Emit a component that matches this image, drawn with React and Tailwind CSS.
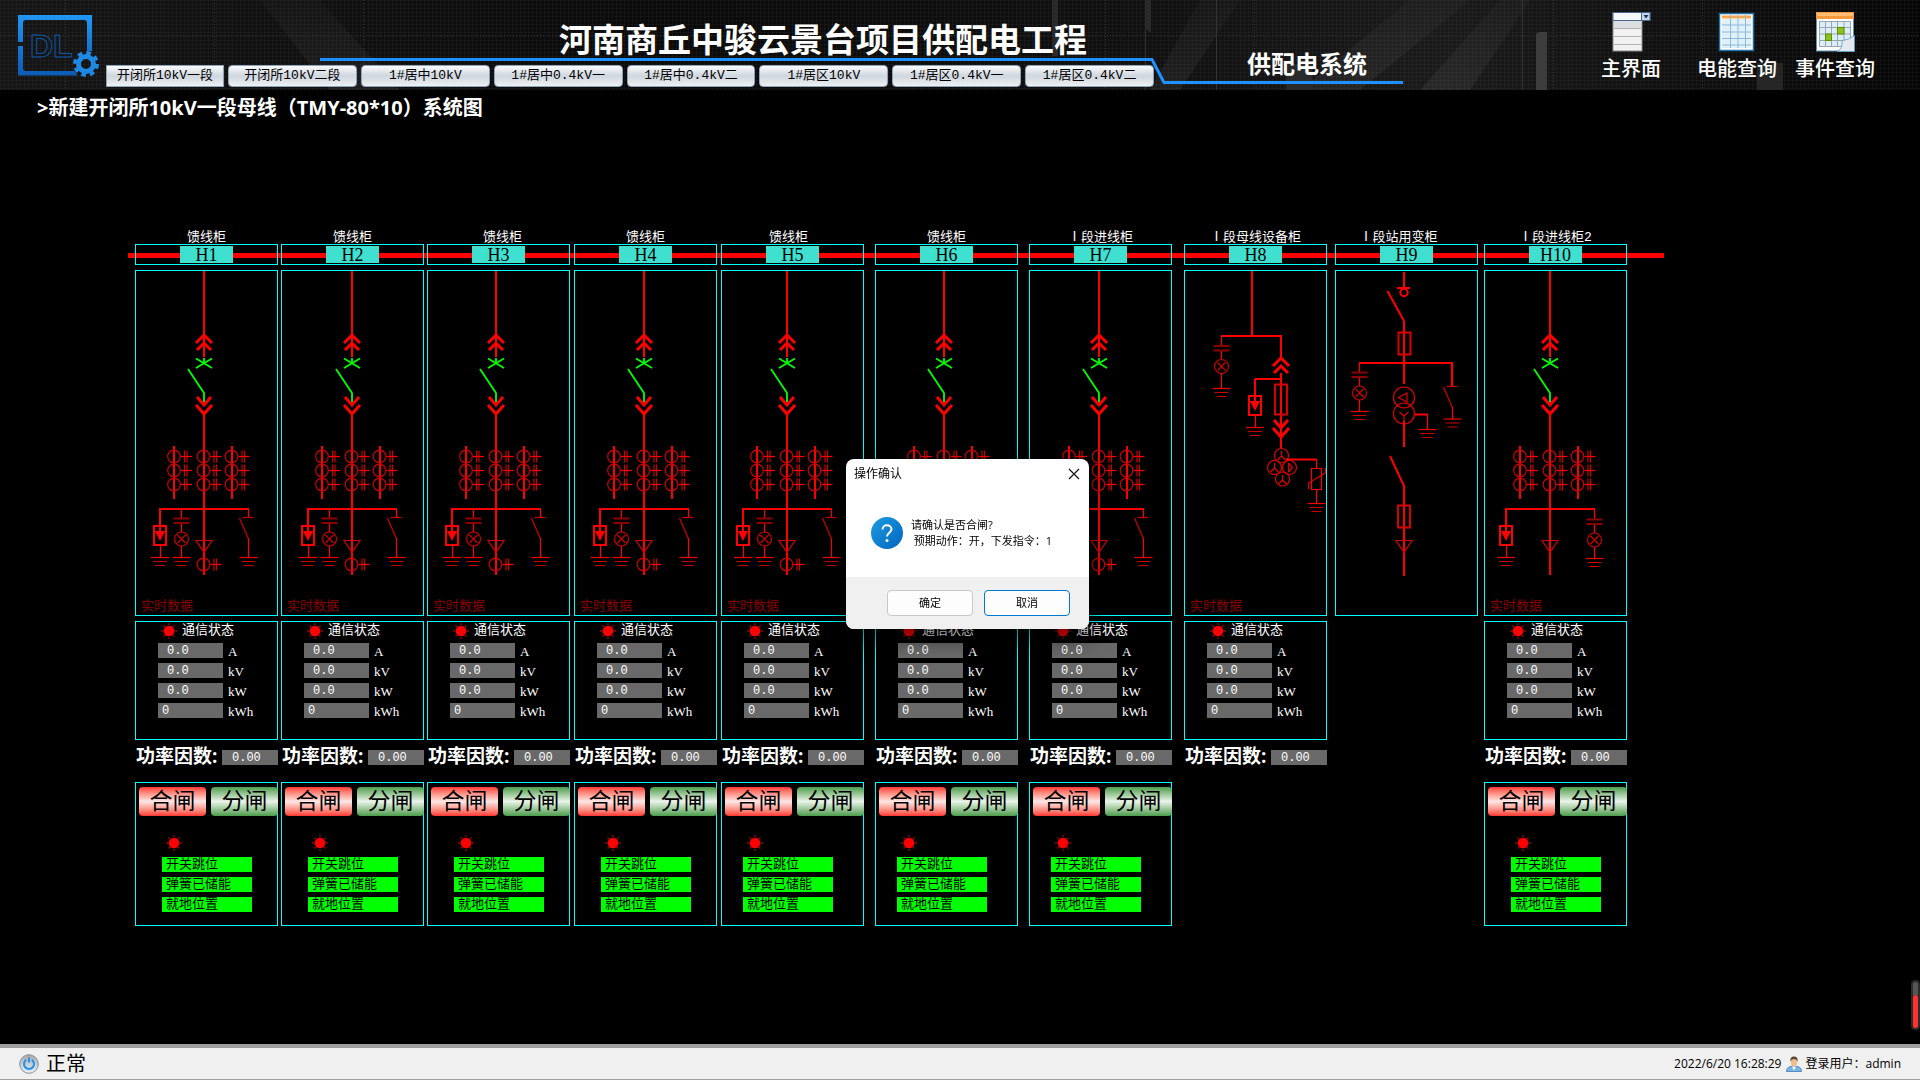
import { useState } from "react";

const tabs = [
  "开闭所10kV一段",
  "开闭所10kV二段",
  "1#居中10kV",
  "1#居中0.4kV一",
  "1#居中0.4kV二",
  "1#居区10kV",
  "1#居区0.4kV一",
  "1#居区0.4kV二",
];

// margin = space to the cabinet on the left, shift = where the feeder line sits in the panel
const bays = [
  { id: "H1", name: "馈线柜", type: "feeder", margin: "", shift: 0, inset: "pl-[26px]" },
  { id: "H2", name: "馈线柜", type: "feeder", margin: "ml-[3px]", shift: 2, inset: "pl-[26px]" },
  { id: "H3", name: "馈线柜", type: "feeder", margin: "ml-[3px]", shift: 0, inset: "pl-[26px]", namePad: "pl-2" },
  { id: "H4", name: "馈线柜", type: "feeder", margin: "ml-1", shift: 1, inset: "pl-[26px]" },
  { id: "H5", name: "馈线柜", type: "feeder", margin: "ml-1", shift: -3, inset: "pl-[21px]", namePad: "pr-2" },
  { id: "H6", name: "馈线柜", type: "feeder", margin: "ml-[11px]", shift: 0, inset: "pl-[21px]" },
  { id: "H7", name: "Ⅰ段进线柜", type: "feeder", margin: "ml-[11px]", shift: 1, inset: "pl-[21px]" },
  { id: "H8", name: "Ⅰ段母线设备柜", type: "pt", margin: "ml-3", shift: 0 },
  { id: "H9", name: "Ⅰ段站用变柜", type: "station", margin: "ml-2", shift: 0, namePad: "pr-4" },
  { id: "H10", name: "Ⅰ段进线柜2", type: "incoming", margin: "ml-[6px]", shift: -3, inset: "pl-[26px]" },
];

const readings = [
  { value: "0.0", unit: "A", pad: "pl-[9px]" },
  { value: "0.0", unit: "kV", pad: "pl-[9px]" },
  { value: "0.0", unit: "kW", pad: "pl-[9px]" },
  { value: "0", unit: "kWh", pad: "pl-1" },
];

const states = ["开关跳位", "弹簧已储能", "就地位置"];

const RED = "#ff0000";
const DIM = "#cc0000";
const DARK = "#8b0000";

/* ---------- schematic symbols ---------- */

function Ground({ x, y }) {
  return (
    <g stroke={DIM} strokeWidth="1.2">
      <path d={`M${x - 9} ${y}h18`} stroke="#f00000" />
      <path d={`M${x - 7} ${y + 4}h14M${x - 5} ${y + 8}h10`} />
    </g>
  );
}

function Transformer({ x, y }) {
  return (
    <g fill="none" strokeWidth="1.2">
      <circle cx={x} cy={y} r="6.3" stroke={DIM} />
      <path d={`M${x + 10.5} ${y - 6}v12M${x + 13} ${y - 6}v12`} stroke={DIM} />
      <path d={`M${x + 7} ${y}h11`} stroke={RED} />
    </g>
  );
}

function Arrester({ x, y }) {
  // y is the point where the branch leaves the wire
  return (
    <g fill="none" stroke={RED} strokeWidth="2">
      <path d={`M${x} ${y}v22`} />
      <rect x={x - 6} y={y + 17} width="12" height="19" />
      <path d={`M${x - 5} ${y + 22}h10l-5 10z`} fill={RED} stroke="none" />
      <path d={`M${x + 0.5} ${y + 36}v12`} strokeWidth="1.2" />
      <Ground x={x} y={y + 48.5} />
    </g>
  );
}

function LampBranch({ x, y, end = 48.5 }) {
  return (
    <g fill="none" stroke={RED} strokeWidth="1.2">
      <path d={`M${x} ${y}v9M${x} ${y + 14}v9`} />
      <path d={`M${x - 8} ${y + 9.5}h16M${x - 8} ${y + 14}h16`} stroke={DARK} strokeWidth="2" />
      <circle cx={x} cy={y + 30} r="7" stroke={DIM} />
      <path d={`M${x - 4} ${y + 26}l8 8M${x + 4} ${y + 26}l-8 8`} stroke={DIM} />
      <path d={`M${x} ${y + 37}V${y + end}`} />
      <Ground x={x} y={y + end} />
    </g>
  );
}

function EarthSwitch({ x, y, drop = 8, end = 48.5 }) {
  return (
    <g fill="none" stroke={DIM} strokeWidth="1.2">
      <path d={`M${x} ${y}v${drop}`} stroke={RED} />
      <path d={`M${x - 6} ${y + drop + 0.5}h11`} />
      <path d={`M${x - 9} ${y + drop + 1}l9 21`} />
      <path d={`M${x} ${y + drop + 21}V${y + end}`} stroke={RED} />
      <Ground x={x} y={y + end} />
    </g>
  );
}

function Chevrons({ x, y, up }) {
  const d = up
    ? `M${x - 8} ${y + 8}l8 -8l8 8M${x - 7} ${y + 15}l7 -7l7 7`
    : `M${x - 7} ${y}l7 8l7 -8M${x - 8} ${y + 8}l8 9l8 -9`;
  return <path d={d} fill="none" stroke={RED} strokeWidth="3" />;
}

function CableHead({ x, y }) {
  return <path d={`M${x - 8} ${y}h16l-8 12z`} fill="none" stroke="#d00000" strokeWidth="1.2" />;
}

function BreakerLine() {
  return (
    <g fill="none" stroke={RED} strokeWidth="2">
      <path d="M69 1V87" />
      <Chevrons x={69} y={65} up />
      <path d="M69 143V305" />
      <Chevrons x={69} y={127} />
      <path
        d="M69 88v5M61 88.5l16 9.5M77 88.5l-16 9.5M53 99l16 24v9"
        stroke="#00ff00"
        strokeWidth="1.8"
      />
      <path d="M39 176v53M97 176v53" />
      {[39, 68.5, 96.5].map((x) =>
        [186.5, 200.5, 214.5].map((y) => <Transformer key={`${x}-${y}`} x={x} y={y} />)
      )}
      <path d="M24 239h90" />
      <Arrester x={25} y={239} />
      <CableHead x={69} y={270.5} />
    </g>
  );
}

function Feeder() {
  return (
    <>
      <BreakerLine />
      <LampBranch x={46.5} y={239} />
      <EarthSwitch x={113.5} y={239} />
      <Transformer x={68.5} y={294.5} />
    </>
  );
}

function Incoming() {
  return (
    <>
      <BreakerLine />
      <LampBranch x={113.5} y={240} />
    </>
  );
}

function BusPT() {
  return (
    <g fill="none" stroke={RED} strokeWidth="2">
      <path d="M68 1V66M37 66H98M97 66V88" />
      <LampBranch x={37.5} y={66.5} end={52} />
      <Chevrons x={97} y={88} up />
      <path d="M97 103V178M97 109H71" />
      <Arrester x={71} y={109} />
      <rect x="91" y="114.5" width="12" height="30" stroke="#d80000" />
      <Chevrons x={97} y={150} />
      <g stroke="#e00000" strokeWidth="1.2">
        <circle cx="97.5" cy="185.5" r="7" />
        <circle cx="90.5" cy="197.5" r="7" />
        <circle cx="105.5" cy="197.5" r="7" />
        <circle cx="98.5" cy="209" r="7" />
        <path d="M97.5 181v5l-4 4M97.5 186l4 4M90.5 193v5l-4 4M90.5 198l4 4M98.5 205v5l-4 4M98.5 210l4 4" />
        <path d="M104.5 193v9M104.5 193l4 4.5l-4 4.5" />
        <path d="M127.5 198.5h10v21h-10zM132.5 219v15" stroke={RED} />
        <path d="M124.5 219v-6l17 -10v-5" />
        <path d="M132.5 190v8" stroke={RED} />
      </g>
      <path d="M102 189.5H133" />
      <Ground x={132.5} y={233.5} />
    </g>
  );
}

function StationTransformer() {
  return (
    <g fill="none" stroke={RED} strokeWidth="2">
      <path d="M69 2V18M62 18H75" />
      <circle cx="69" cy="22.5" r="3.7" />
      <path d="M52.5 21L69 51" />
      <path d="M69 51V114" />
      <rect x="63.5" y="62.5" width="12" height="22" stroke="#d80000" />
      <path d="M24 93H118" />
      <LampBranch x={24.5} y={93} />
      <path d="M117 93V116" />
      <EarthSwitch x={117.5} y={93} drop={23} end={56} />
      <g stroke="#e00000" strokeWidth="1.2">
        <circle cx="69" cy="127.5" r="10.5" />
        <circle cx="69" cy="143.5" r="10.5" />
        <path d="M63.5 127.5l8.5 -4.5v9zM64.5 142l4.5 4l4.5 -4M69 146v6" />
      </g>
      <path d="M80 144.5H92.5" />
      <path d="M92.5 144V159" strokeWidth="1.2" />
      <Ground x={92.5} y={159.5} />
      <path d="M69 151V177" />
      <path d="M55 186L69 216V306" />
      <rect x="63" y="235.5" width="12" height="22" stroke="#d80000" />
      <CableHead x={69} y={270.5} />
    </g>
  );
}

const diagrams = {
  feeder: Feeder,
  incoming: Incoming,
  pt: BusPT,
  station: StationTransformer,
};

/* ---------- cabinet pieces ---------- */

function Lamp() {
  return (
    <svg width="16" height="16" viewBox="0 0 16 16" className="shrink-0">
      <path
        d="M8 0v2M8 14v2M0 8h2M14 8h2M2.5 2.5l1.5 1.5M12 12l1.5 1.5M2.5 13.5l1.5 -1.5M12 4l1.5 -1.5"
        stroke="#a00000"
        strokeWidth="1.3"
      />
      <circle cx="8" cy="8" r="5.3" fill="#ff0000" />
    </svg>
  );
}

function Readings() {
  return (
    <section className="mt-[5px] h-[119px] border border-[#00ffff]">
      <div className="flex h-[21px] items-start gap-[5px] pt-px pl-[25px] text-[13px] leading-4">
        <Lamp />
        <span>通信状态</span>
      </div>
      <dl className="flex flex-col gap-[5px] pl-[22px] leading-[17px]">
        {readings.map((r) => (
          <div key={r.unit} className="flex h-[15px] gap-[5px]">
            <dd className={`w-[65px] bg-[#696969] text-xs leading-[17px] ${r.pad}`}>{r.value}</dd>
            <dt className="font-['Liberation_Serif',serif] text-[13px]">{r.unit}</dt>
          </div>
        ))}
      </dl>
    </section>
  );
}

function PowerFactor() {
  return (
    <div className="flex h-[42px] justify-between">
      <span className="pl-px font-['Open_Sans','Noto_Sans_CJK_SC',sans-serif] text-[19px] leading-8 font-bold whitespace-nowrap">
        功率因数:
      </span>
      <span className="mt-[10px] h-[15px] w-14 bg-[#696969] pl-[10px] text-xs leading-[17px]">0.00</span>
    </div>
  );
}

function Controls({ inset, onOperate }) {
  return (
    <section className="h-[144px] border border-[#00ffff]">
      <div className="flex gap-[5px] pt-1 pl-[3px] font-['Noto_Sans_CJK_SC',sans-serif] text-[23px] leading-6 text-black">
        <button
          onClick={onOperate}
          className="h-[29px] w-[67px] shrink-0 rounded-sm bg-linear-to-b from-[#ff3030] via-[#ffe6e6] to-[#ff3030] pb-[6px]"
        >
          合闸
        </button>
        <button
          onClick={onOperate}
          className="h-[29px] w-[67px] shrink-0 rounded-sm bg-linear-to-b from-[#4a9c4a] via-[#eaf4ea] to-[#4a9c4a] pb-[6px]"
        >
          分闸
        </button>
      </div>
      <div className={`pt-[19px] ${inset}`}>
        <div className="pl-1">
          <Lamp />
        </div>
        <ul className="mt-[6px] flex flex-col gap-[5px] text-[13px] leading-[15px] text-black">
          {states.map((s) => (
            <li key={s} className="h-[15px] w-[90px] bg-[#00ff00] pl-1">
              {s}
            </li>
          ))}
        </ul>
      </div>
    </section>
  );
}

function Bay({ bay, onOperate }) {
  const Diagram = diagrams[bay.type];
  return (
    <article className={`relative w-[143px] shrink-0 ${bay.margin}`}>
      <h2 className={`h-[15px] text-center text-[13px] leading-[18px] whitespace-nowrap ${bay.namePad ?? ""}`}>
        {bay.name}
      </h2>
      <div className="flex h-[21px] items-center justify-center border border-[#00ffff]">
        <span className="h-[17px] w-[53px] bg-[#40e0d0] text-center font-['Liberation_Serif',serif] text-lg leading-[18px] text-black">
          {bay.id}
        </span>
      </div>
      <section className="mt-[5px] grid h-[346px] border border-[#00ffff]">
        <svg viewBox={`${1 - bay.shift} 1 141 344`} className="col-start-1 row-start-1 h-[344px] w-[141px]">
          <Diagram />
        </svg>
        {bay.type !== "station" && (
          <span className="col-start-1 row-start-1 self-end pl-[5px] text-[13px] leading-4 text-[#8b0000]">
            实时数据
          </span>
        )}
      </section>
      {bay.type !== "station" && (
        <>
          <Readings />
          <PowerFactor />
        </>
      )}
      {bay.inset && <Controls inset={bay.inset} onOperate={onOperate} />}
    </article>
  );
}

/* ---------- header ---------- */

function HeaderArt() {
  return (
    <svg className="absolute inset-0 h-full w-full" aria-hidden="true">
      <defs>
        <linearGradient id="streak" x1="0" y1="0" x2="0" y2="1">
          <stop offset="0" stopColor="#fff" stopOpacity="0.02" />
          <stop offset="1" stopColor="#fff" stopOpacity="0.06" />
        </linearGradient>
        <linearGradient id="fade" x1="0" y1="0" x2="1" y2="0">
          <stop offset="0" stopColor="#151515" />
          <stop offset="0.35" stopColor="#0a0a0a" />
          <stop offset="0.6" stopColor="#101010" />
          <stop offset="0.75" stopColor="#1a1a1a" />
          <stop offset="1" stopColor="#060606" />
        </linearGradient>
        <pattern id="mesh" width="4" height="4" patternUnits="userSpaceOnUse">
          <path d="M0 .5h4M.5 0v4" stroke="#fff" strokeOpacity="0.03" />
        </pattern>
      </defs>
      <rect width="100%" height="100%" fill="url(#fade)" />
      <rect width="100%" height="100%" fill="url(#mesh)" />
      <path
        d="M260 0h60l80 90h-70zM1150 90l50 -90h40l-60 90zM1300 90l110 -90h60l-110 90zM1420 90l80 -90h30l-60 90z"
        fill="url(#streak)"
      />
      <path
        d="M0 35.5H2000M65.5 0v90M214.5 0v90M363.5 0v90M1105.5 0v90M1254.5 0v90M1404.5 0v90M1553.5 0v90M1702.5 0v90"
        stroke="#333"
        strokeDasharray="1 2"
      />
      <path d="M1052 0h6v56h-6zM1145 0h6v33l-6 -4zM1286 64h26v26h-26z" fill="#2a2a2a" />
      <path d="M1522.5 0v90M1145.5 30v60M1216.5 0v90" stroke="#333" />
      <path d="M1536 90V34l3 -2h8v58z" fill="#3d3d3d" />
      <path d="M1757 63h26v27h-26z" fill="#262626" />
      <path d="M320 59.5H1152L1164 82.5H1403" fill="none" stroke="#1e90ff" strokeWidth="3" />
    </svg>
  );
}

function Logo() {
  return (
    <svg width="82" height="64" viewBox="0 0 82 64" className="shrink-0" role="img" aria-label="DL">
      <defs>
        <linearGradient id="logo" x1="0" y1="0" x2="0" y2="1">
          <stop offset="0" stopColor="#2196f3" />
          <stop offset="1" stopColor="#0d5bb5" />
        </linearGradient>
      </defs>
      <path
        d="M0 28V1h74v36h-5V9q0 -3 -3 -3H8q-3 0 -3 3v19zM0 32h5v22q0 3 3 3h48l4 4.5H0z"
        fill="url(#logo)"
      />
      <text
        x="12"
        y="43"
        fill="none"
        stroke="#0f55a5"
        strokeWidth="1"
        className="font-['Liberation_Sans',sans-serif] text-[32px] font-bold"
      >
        DL
      </text>
      <circle cx="68" cy="50" r="7.5" fill="none" stroke="#1e88e5" strokeWidth="5" />
      <circle cx="68" cy="50" r="11" fill="none" stroke="#1e88e5" strokeWidth="4" strokeDasharray="4.6 4.04" />
    </svg>
  );
}

function ListIcon() {
  return (
    <svg width="40" height="40" viewBox="0 0 40 40">
      <rect x="2" y="1" width="29" height="38" fill="#f2f2f2" stroke="#8a8a8a" />
      <path d="M3 9h27v7H3z" fill="#dcdfe2" />
      <path d="M3 16.5h27M3 24.5h27M3 32.5h27" stroke="#b5b0ae" />
      <rect x="2" y="0.5" width="37" height="8" fill="#f4f8fc" stroke="#4a6690" />
      <rect x="30.5" y="0.5" width="8.5" height="8" fill="#c5d6ea" stroke="#4a6690" />
      <path d="M32.5 3h5l-2.5 3.5z" fill="#1c355e" />
    </svg>
  );
}

function TableIcon() {
  return (
    <svg width="40" height="40" viewBox="0 0 40 40">
      <rect x="2.5" y="1.5" width="34" height="37" fill="#fff" stroke="#1d6fa5" strokeWidth="1.5" />
      <path d="M5 7h29v29H5z" fill="#dff1fb" />
      <path d="M5 3.5h29v3H5z" fill="#f7a64a" />
      <path d="M5 13h29M5 20h29M5 26.5h29M5 33h29M13.5 3v33M21 3v33M28.5 3v33" stroke="#8db9d8" />
    </svg>
  );
}

function CalendarIcon() {
  return (
    <svg width="40" height="40" viewBox="0 0 40 40">
      <rect x="1.5" y="1" width="37" height="38" fill="#fff" stroke="#5d93b8" />
      <path d="M1 0h38v7H1z" fill="#f79a3a" />
      <path d="M2 1h36v3H2z" fill="#ffbe73" />
      <path d="M4 9h32v26H4z" fill="#dceefa" />
      <path
        d="M4.5 9.5h31v25h-31zM4.5 15.5h31M4.5 22h31M4.5 28.5h31M10.5 9v26M16.5 9v26M22.5 9v26M29 9v26"
        fill="none"
        stroke="#9aa7b0"
      />
      <path d="M22.5 15.5h6.5v6.5h-6.5zM10.5 22h6v6.5h-6z" fill="#8cc21c" stroke="#5f8f00" />
      <path d="M22 39.5q6 -3 5 -11q6 0 12.5 -5v16z" fill="#e3e9ee" stroke="#5c9cc8" strokeWidth="0.8" />
    </svg>
  );
}

function Header() {
  return (
    <header className="relative h-[90px] overflow-hidden bg-[#0c0c0c]">
      <HeaderArt />
      <div className="relative flex h-full">
        <div className="w-[106px] shrink-0 pt-[14px] pl-[18px]">
          <Logo />
        </div>
        <div className="w-[1048px] shrink-0">
          <h1 className="h-[65px] pt-[15px] pr-[67px] text-right font-['Noto_Sans_CJK_SC',sans-serif] text-[33px] leading-[46px] font-bold">
            河南商丘中骏云景台项目供配电工程
          </h1>
          <nav className="flex gap-1">
            {tabs.map((tab) => (
              <button
                key={tab}
                className="h-[22px] flex-1 rounded-[4px] border border-[#8ea3ba] bg-linear-to-b from-[#fafcfd] via-[#cfd6de] to-[#eef1f4] text-[13px] leading-5 whitespace-nowrap text-black first:w-[118px] first:flex-none first:rounded-none"
              >
                {tab}
              </button>
            ))}
          </nav>
        </div>
        <h2 className="shrink-0 pt-[45px] pl-[93px] font-['Noto_Sans_CJK_SC',sans-serif] text-2xl leading-9 font-bold">
          供配电系统
        </h2>
        <div className="ml-auto flex shrink-0 items-start gap-[18px] pt-3 pr-[45px] font-['Noto_Sans_CJK_SC',sans-serif] text-xl leading-7 font-medium">
          <button className="mr-[18px] flex flex-col items-center gap-[2px]">
            <ListIcon />
            主界面
          </button>
          <button className="flex flex-col items-center gap-[2px]">
            <TableIcon />
            电能查询
          </button>
          <button className="flex flex-col items-center gap-[2px]">
            <CalendarIcon />
            事件查询
          </button>
        </div>
      </div>
    </header>
  );
}

/* ---------- dialog & status bar ---------- */

function ConfirmDialog({ onClose }) {
  return (
    <div className="fixed inset-0 flex items-center justify-center pt-2 pl-[15px]">
      <div
        role="dialog"
        aria-labelledby="dialog-title"
        className="w-[243px] overflow-hidden rounded-lg bg-white font-['Open_Sans','Noto_Sans_CJK_SC',sans-serif] text-[11px] leading-4 text-black shadow-[0_8px_20px_2px_rgba(0,0,0,0.5)]"
      >
        <div className="flex h-[30px] items-center justify-between pr-[9px] pl-2">
          <h2 id="dialog-title" className="text-xs">操作确认</h2>
          <button aria-label="关闭" onClick={onClose}>
            <svg width="12" height="12" viewBox="0 0 12 12">
              <path d="M1 1l10 10M11 1L1 11" stroke="#111" strokeWidth="1.2" />
            </svg>
          </button>
        </div>
        <div className="flex h-[88px] gap-2 pt-[28px] pl-[25px]">
          <svg width="32" height="32" viewBox="0 0 32 32" className="shrink-0">
            <defs>
              <linearGradient id="ask" x1="0" y1="0" x2="1" y2="1">
                <stop offset="0" stopColor="#1f9ae0" />
                <stop offset="1" stopColor="#0067c0" />
              </linearGradient>
            </defs>
            <circle cx="16" cy="16" r="16" fill="url(#ask)" />
            <path
              d="M11.5 12.5c0 -2.6 2 -4.2 4.5 -4.2s4.5 1.6 4.5 4c0 3.4 -4.5 3.6 -4.5 7.2"
              fill="none"
              stroke="#fff"
              strokeWidth="2"
            />
            <circle cx="16" cy="23.5" r="1.5" fill="#fff" />
          </svg>
          <p className="whitespace-nowrap">
            请确认是否合闸?
            <br />
            &nbsp;预期动作：开，下发指令：1
          </p>
        </div>
        <div className="flex h-[52px] items-center justify-end gap-[11px] bg-[#f0f0f0] pr-[19px]">
          <button onClick={onClose} className="h-[26px] w-[86px] rounded-[4px] border border-[#c8c8c8] bg-[#fdfdfd]">
            确定
          </button>
          <button onClick={onClose} className="h-[26px] w-[86px] rounded-[4px] border border-[#0078d4] bg-[#fdfdfd]">
            取消
          </button>
        </div>
      </div>
    </div>
  );
}

function StatusBar() {
  return (
    <footer className="flex h-9 items-center border-t-4 border-b border-[#a0a0a0] bg-[#f0f0f0] px-[19px] pt-px font-['Open_Sans','Noto_Sans_CJK_SC',sans-serif] text-xs text-black">
      <svg width="20" height="20" viewBox="0 0 20 20">
        <defs>
          <linearGradient id="power" x1="0" y1="0" x2="0" y2="1">
            <stop offset="0" stopColor="#a8a8a8" />
            <stop offset="1" stopColor="#e6f3fb" />
          </linearGradient>
        </defs>
        <circle cx="10" cy="10" r="9.3" fill="url(#power)" stroke="#8a8f94" />
        <path d="M7.2 5.8a5 5 0 1 0 5.6 0M10 3.5v5" fill="none" stroke="#2492ea" strokeWidth="2" />
      </svg>
      <span className="pl-[7px] text-xl leading-7">正常</span>
      <span className="ml-auto">2022/6/20 16:28:29</span>
      <svg width="16" height="16" viewBox="0 0 16 16" className="mr-[3px] ml-[5px]">
        <path d="M0.5 15.5q0 -4.5 4.5 -5h6q4.5 0.5 4.5 5z" fill="#7db4e6" stroke="#3f7db8" strokeWidth="0.8" />
        <path d="M6 10.5h4l-2 4z" fill="#fff" />
        <ellipse cx="8" cy="6" rx="3.3" ry="4.2" fill="#f0bd8c" />
        <path d="M4.3 5.5q-0.3 -5 3.7 -5t3.7 5q-0.7 -2.5 -3.7 -2.5t-3.7 2.5z" fill="#5a4632" />
      </svg>
      <span>登录用户：admin</span>
    </footer>
  );
}

export default function App() {
  const [dialogOpen, setDialogOpen] = useState(true);

  return (
    <div className="relative flex min-h-screen flex-col overflow-hidden bg-black font-['Liberation_Mono','Noto_Sans_CJK_SC',monospace] text-white">
      <Header />
      <main className="relative flex-1">
        <h2 className="pt-[2px] pl-[37px] font-['Open_Sans','Noto_Sans_CJK_SC',sans-serif] text-xl leading-8 font-bold">
          &gt;新建开闭所10kV一段母线（TMY-80*10）系统图
        </h2>
        <div className="relative mt-[105px] ml-[135px] flex w-max items-start">
          {/* busbar */}
          <div className="absolute top-6 -right-[37px] -left-[7px] h-[5px] bg-[#ff0000]" />
          {bays.map((bay) => (
            <Bay key={bay.id} bay={bay} onOperate={() => setDialogOpen(true)} />
          ))}
        </div>
        <div className="absolute right-0 bottom-[14px] flex h-[50px] w-[9px] flex-col rounded-full bg-[#2b2b2b] p-[2px]">
          <div className="h-[13px] rounded-t-full bg-[#555]" />
          <div className="flex-1 rounded-full bg-[#ff3030]" />
        </div>
      </main>
      <StatusBar />
      {dialogOpen && <ConfirmDialog onClose={() => setDialogOpen(false)} />}
    </div>
  );
}
